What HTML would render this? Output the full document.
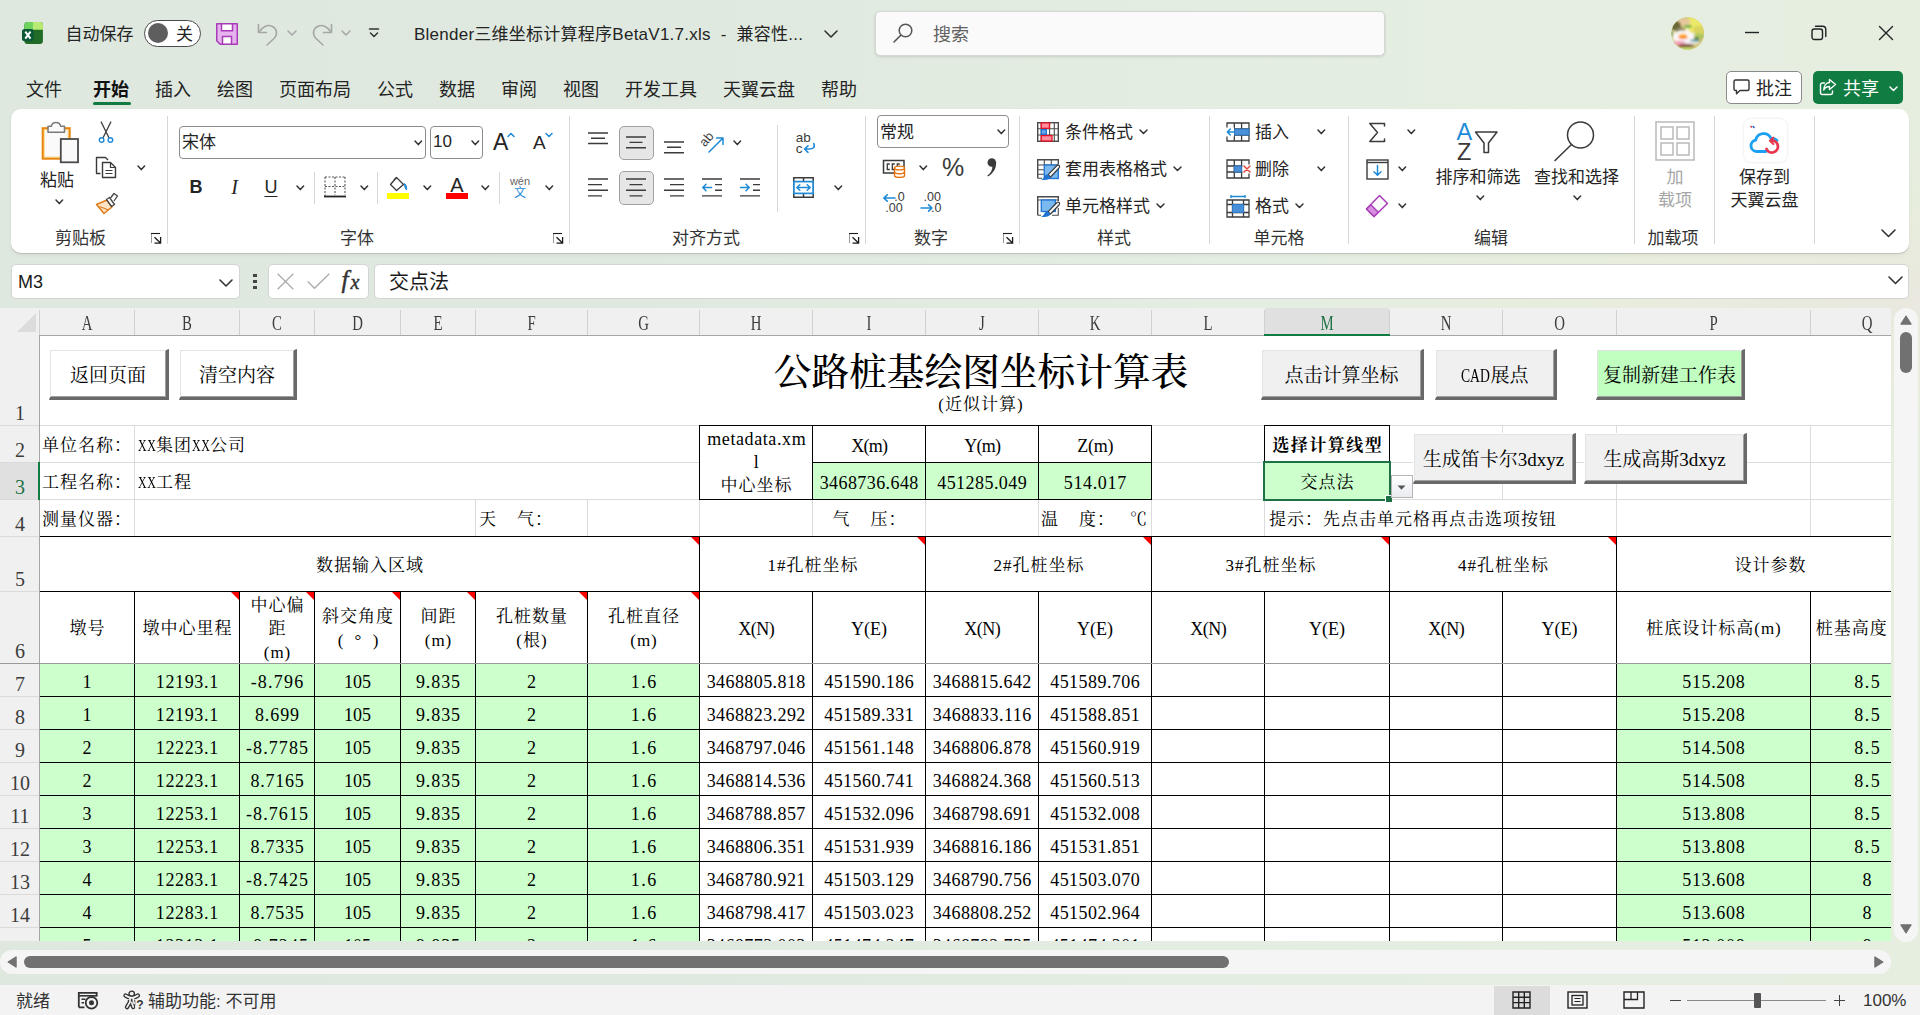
<!DOCTYPE html>
<html lang="zh-CN"><head><meta charset="utf-8"><title>Excel</title>
<style>
*{box-sizing:border-box;margin:0;padding:0}
html,body{width:1920px;height:1015px;overflow:hidden}
body{position:relative;background:radial-gradient(ellipse 620px 150px at 1920px 300px,#eae8df 0,rgba(232,237,220,.85) 55%,rgba(230,238,222,0) 100%),linear-gradient(90deg,#dee8df 0,#e0e9df 35%,#e3ede1 62%,#e5eee1 85%,#e6eee0 100%);font-family:"Liberation Sans","Noto Sans CJK SC",sans-serif;color:#242424}
.abs{position:absolute}
.t{position:absolute;white-space:nowrap}
svg{position:absolute;overflow:visible}

.ui{position:absolute;white-space:nowrap;color:#242424}
.u17{font-size:17px;line-height:24px}
.u18{font-size:18px;line-height:24px}
.sep{position:absolute;width:1px;background:#d6d6d6}
.box{position:absolute;background:#fff;border:1px solid #8c8c8c;border-radius:4px}
.selbtn{position:absolute;background:#e6e6e6;border:1px solid #a0a0a0;border-radius:5px}

#sheet{position:absolute;left:0;top:0;width:1891px;height:941px;overflow:hidden}
#sheet .bg{position:absolute;left:0;top:308px;width:1891px;height:633px;background:#fff}
#sheet .hb{position:absolute;background:#f0f0f0}
.ln{position:absolute;background:#000}
.gl{position:absolute;background:#dcdcdc}
.fill{position:absolute;background:#ccffcc}
.c{position:absolute;display:flex;align-items:center;justify-content:center;white-space:nowrap;
 font-family:"Liberation Serif","Noto Serif CJK SC",serif;font-size:17px;line-height:20px;color:#000;text-align:center;padding-top:3px;letter-spacing:1px;padding-left:1px}
.c.l{justify-content:flex-start;text-align:left;padding-left:0}
.c.r{justify-content:flex-end;text-align:right}
.n{font-size:18px;letter-spacing:.45px;padding-left:.45px}
.ch{position:absolute;top:310px;height:26px;font:20px/26px "Liberation Serif",serif;color:#3c3c3c;text-align:center;transform:scaleX(.74)}
.rh{position:absolute;left:0;width:40px;font:20px/20px "Liberation Serif",serif;color:#3c3c3c;text-align:center}
.tri{position:absolute;width:0;height:0;border-top:8px solid #ff0000;border-left:8px solid transparent}
.btn{position:absolute;background:#f0f0f0;border-style:solid;border-width:1px 3px 3px 1px;border-color:#fff #696969 #696969 #fff;
 box-shadow:inset 1px 1px 0 #e3e3e3, inset -1px -1px 0 #a0a0a0;display:flex;align-items:center;justify-content:center;
 font-family:"Liberation Serif","Noto Serif CJK SC",serif;font-size:19px;color:#000;white-space:nowrap}
</style></head>
<body>
<svg style="left:22px;top:22px" width="21" height="22" viewBox="0 0 21 22" ><rect x="2.4" y="0" width="18.5" height="22" rx="3" fill="#206b26"/><path d="M2.4 3A3 3 0 0 1 5.400 0H11V7.500H2.400Z" fill="#6fd35f"/><path d="M11 0H17.900A3 3 0 0 1 20.900 3V7.800H11Z" fill="#b9ea74"/><rect x="0" y="7" width="11.700" height="12.200" rx="2.600" fill="#0b5a35"/><path d="M3.300 9.700L8.500 16.600M8.500 9.700L3.300 16.600" stroke="#fff" stroke-width="2"/></svg>
<div class="ui" style="top:22.700000000000003px;font-size:17px;line-height:24px;left:65.5px">自动保存</div>
<div class="abs" style="left:144px;top:19.5px;width:57px;height:27px;border:1px solid #4a4a4a;border-radius:14px;background:#fff"></div>
<div class="abs" style="left:148px;top:23px;width:20px;height:20px;border-radius:50%;background:#5e5e5e"></div>
<div class="ui" style="top:22.700000000000003px;font-size:17px;line-height:24px;left:176px">关</div>
<svg style="left:216px;top:23px" width="22" height="22" viewBox="0 0 22 22" ><path d="M0.75 0.75H21.25V21.25H4.2L0.75 17.8Z" fill="#e6b3ee" stroke="#a83bb8" stroke-width="1.5" stroke-linejoin="round"/><rect x="5.5" y="0.75" width="11" height="7" fill="#fff" stroke="#a83bb8" stroke-width="1.5"/><rect x="6.5" y="13.5" width="9" height="7.7" fill="#fff" stroke="#a83bb8" stroke-width="1.5"/></svg>
<svg style="left:256px;top:22px" width="24" height="24" viewBox="0 0 24 24" ><path d="M2.5 2.5V10.5H10.5" fill="none" stroke="#a6a6a6" stroke-width="1.6" stroke-linecap="round" stroke-linejoin="round"/><path d="M3 10.2C6 5 11.5 2.3 16 4.2C21 6.3 21.8 12 18.5 16L11 23" fill="none" stroke="#a6a6a6" stroke-width="1.6" stroke-linecap="round"/></svg>
<svg style="left:287.0px;top:30.0px" width="10" height="6" viewBox="0 0 10 6" ><path d="M1 1L5.0 5L9 1" fill="none" stroke="#a6a6a6" stroke-width="1.5" stroke-linecap="round" stroke-linejoin="round"/></svg>
<svg style="left:310px;top:22px" width="24" height="24" viewBox="0 0 24 24" ><path d="M21.5 2.5V10.5H13.5" fill="none" stroke="#a6a6a6" stroke-width="1.6" stroke-linecap="round" stroke-linejoin="round"/><path d="M21 10.2C18 5 12.5 2.3 8 4.2C3 6.3 2.2 12 5.5 16L13 23" fill="none" stroke="#a6a6a6" stroke-width="1.6" stroke-linecap="round"/></svg>
<svg style="left:341.0px;top:30.0px" width="10" height="6" viewBox="0 0 10 6" ><path d="M1 1L5.0 5L9 1" fill="none" stroke="#a6a6a6" stroke-width="1.5" stroke-linecap="round" stroke-linejoin="round"/></svg>
<svg style="left:368px;top:27px" width="12" height="12" viewBox="0 0 12 12" ><path d="M1.5 2H10.5" stroke="#333" stroke-width="1.5" stroke-linecap="round"/><path d="M2.5 6L6 9.5L9.5 6" fill="none" stroke="#333" stroke-width="1.5" stroke-linecap="round" stroke-linejoin="round"/></svg>
<div class="ui" style="top:22.700000000000003px;font-size:17px;line-height:24px;left:414px;letter-spacing:.25px">Blender三维坐标计算程序BetaV1.7.xls&nbsp;&nbsp;-&nbsp;&nbsp;兼容性...</div>
<svg style="left:824.0px;top:30.0px" width="14" height="8" viewBox="0 0 14 8" ><path d="M1 1L7.0 7L13 1" fill="none" stroke="#333" stroke-width="1.6" stroke-linecap="round" stroke-linejoin="round"/></svg>
<div class="abs" style="left:875px;top:11px;width:510px;height:45px;background:#fafafa;border:1px solid #d4d7d3;border-radius:5px;box-shadow:0 1px 3px rgba(0,0,0,.12)"></div>
<svg style="left:892px;top:22px" width="22" height="22" viewBox="0 0 22 22" ><circle cx="13.5" cy="8.5" r="6.3" fill="none" stroke="#555" stroke-width="1.5"/><path d="M9 13L2 20" stroke="#555" stroke-width="1.6" stroke-linecap="round"/></svg>
<div class="ui" style="top:22.700000000000003px;font-size:18px;line-height:24px;left:933px;color:#616161">搜索</div>
<svg style="left:1671px;top:17px" width="33" height="33" viewBox="0 0 33 33" ><defs><clipPath id="avc"><circle cx="16.700" cy="16.500" r="16.300"/></clipPath><filter id="avb" x="-20%" y="-20%" width="140%" height="140%"><feGaussianBlur stdDeviation="1.100"/></filter></defs><g clip-path="url(#avc)"><rect width="34" height="34" fill="#cfc672"/><g filter="url(#avb)"><ellipse cx="24" cy="8" rx="11" ry="9" fill="#ece868"/><ellipse cx="28" cy="14" rx="6" ry="5" fill="#d9d35e"/><ellipse cx="12.500" cy="5" rx="7" ry="4" fill="#e6c89c"/><ellipse cx="5" cy="9" rx="5" ry="5" fill="#6a6838"/><ellipse cx="9.500" cy="13" rx="4.500" ry="2.500" fill="#8d8762"/><ellipse cx="17" cy="9.500" rx="4" ry="1.400" fill="#6fae4a"/><ellipse cx="27.500" cy="19" rx="6" ry="2.600" fill="#a8c860"/><ellipse cx="12.500" cy="20.500" rx="11" ry="7" fill="#faf3f4"/><path d="M2 13L6.500 18L10 13L13 18L16 10.500L19.500 17L24 16L20 25L5 25Z" fill="#fbf6f7"/><ellipse cx="12" cy="20" rx="4.600" ry="2.100" fill="#ff8a1c"/><ellipse cx="12" cy="17.700" rx="3.500" ry="1" fill="#ffc23a"/><ellipse cx="12" cy="23.700" rx="2.800" ry="1.600" fill="#eef3f8"/><ellipse cx="8.500" cy="26" rx="6" ry="2.300" fill="#f2a3ba"/><ellipse cx="25.500" cy="21.300" rx="2.800" ry="1.200" fill="#6b7a30"/><ellipse cx="24" cy="23.600" rx="5" ry="1.100" fill="#2f9ab0"/><ellipse cx="21" cy="26" rx="8" ry="1.500" fill="#e9e4ea"/><ellipse cx="15" cy="28.600" rx="8" ry="1.700" fill="#7a4030"/><ellipse cx="16" cy="31.800" rx="6" ry="1.600" fill="#b9dc6a"/><ellipse cx="0.800" cy="17" rx="1.100" ry="3.200" fill="#5a9a3a"/></g></g></svg>
<svg style="left:1744px;top:25px" width="16" height="16" viewBox="0 0 16 16" ><path d="M1 7.5H15" stroke="#222" stroke-width="1.4"/></svg>
<svg style="left:1811px;top:25px" width="16" height="16" viewBox="0 0 16 16" ><rect x="1" y="4" width="10.5" height="10.5" rx="2.2" fill="none" stroke="#222" stroke-width="1.4"/><path d="M4.5 1.2H11.5A3.3 3.3 0 0 1 14.8 4.5V11.5" fill="none" stroke="#222" stroke-width="1.4" stroke-linecap="round"/></svg>
<svg style="left:1878px;top:25px" width="16" height="16" viewBox="0 0 16 16" ><path d="M1.5 1.5L14.5 14.5M14.5 1.5L1.5 14.5" stroke="#222" stroke-width="1.4" stroke-linecap="round"/></svg>
<div class="ui" style="top:77.7px;font-size:18px;line-height:24px;left:26px">文件</div>
<div class="ui" style="top:77.7px;font-size:18px;line-height:24px;left:93px;color:#111;font-weight:700">开始</div>
<div class="ui" style="top:77.7px;font-size:18px;line-height:24px;left:155px">插入</div>
<div class="ui" style="top:77.7px;font-size:18px;line-height:24px;left:217px">绘图</div>
<div class="ui" style="top:77.7px;font-size:18px;line-height:24px;left:279px">页面布局</div>
<div class="ui" style="top:77.7px;font-size:18px;line-height:24px;left:377px">公式</div>
<div class="ui" style="top:77.7px;font-size:18px;line-height:24px;left:439px">数据</div>
<div class="ui" style="top:77.7px;font-size:18px;line-height:24px;left:501px">审阅</div>
<div class="ui" style="top:77.7px;font-size:18px;line-height:24px;left:563px">视图</div>
<div class="ui" style="top:77.7px;font-size:18px;line-height:24px;left:625px">开发工具</div>
<div class="ui" style="top:77.7px;font-size:18px;line-height:24px;left:723px">天翼云盘</div>
<div class="ui" style="top:77.7px;font-size:18px;line-height:24px;left:821px">帮助</div>
<div class="abs" style="left:93px;top:102px;width:38px;height:3px;border-radius:2px;background:#107c41"></div>
<div class="abs" style="left:1726px;top:71px;width:76px;height:33px;background:#fff;border:1px solid #8a8a8a;border-radius:5px"></div>
<svg style="left:1733px;top:79px" width="18" height="16" viewBox="0 0 18 16" ><path d="M2.5 1H14.5A1.5 1.5 0 0 1 16 2.5V10A1.5 1.5 0 0 1 14.5 11.5H7L3.5 14.8V11.5H2.5A1.5 1.5 0 0 1 1 10V2.5A1.5 1.5 0 0 1 2.5 1Z" fill="none" stroke="#333" stroke-width="1.4" stroke-linejoin="round"/></svg>
<div class="ui" style="top:77.2px;font-size:18px;line-height:24px;left:1756px">批注</div>
<div class="abs" style="left:1813px;top:71px;width:90px;height:33px;background:#107c41;border-radius:5px"></div>
<svg style="left:1819px;top:78px" width="18" height="18" viewBox="0 0 18 18" ><path d="M5.5 5H3.5A2 2 0 0 0 1.5 7V14.5A2 2 0 0 0 3.5 16.5H11.5A2 2 0 0 0 13.500 14.5V13" fill="none" stroke="#fff" stroke-width="1.4" stroke-linecap="round"/><path d="M10.5 1.5L16.5 6.5L10.5 11.5V8.5C7.5 8.5 5.8 9.8 4.8 12C4.8 8 7 4.8 10.5 4.5Z" fill="none" stroke="#fff" stroke-width="1.4" stroke-linejoin="round"/></svg>
<div class="ui" style="top:77.2px;font-size:18px;line-height:24px;left:1843px;color:#fff">共享</div>
<svg style="left:1888.5px;top:85.75px" width="9" height="5.5" viewBox="0 0 9 5.5" ><path d="M1 1L4.5 4.5L8 1" fill="none" stroke="#fff" stroke-width="1.5" stroke-linecap="round" stroke-linejoin="round"/></svg>
<div class="abs" style="left:11px;top:109px;width:1898px;height:144px;background:#fff;border-radius:10px;box-shadow:0 1px 0 rgba(0,0,0,.13),0 2px 4px rgba(0,0,0,.06)"></div>
<svg style="left:40px;top:120px" width="41" height="45" viewBox="0 0 41 45" ><rect x="2.700" y="8.200" width="27" height="30.500" fill="#fbe2a4" stroke="#e8850c" stroke-width="2"/><rect x="5" y="10.500" width="22.400" height="25.900" fill="#fafafa"/><path d="M8 12.300V6.300H11.300A4.800 4.800 0 0 1 20.700 6.300H24.500V12.300Z" fill="#fafafa" stroke="#7a7a7a" stroke-width="1.500" stroke-linejoin="round"/><rect x="20.800" y="19" width="17.200" height="23.300" fill="#fafafa" stroke="#4a4a4a" stroke-width="1.800"/></svg>
<div class="ui" style="top:169.0px;font-size:17px;line-height:24px;left:-143.0px;width:400px;text-align:center">粘贴</div>
<svg style="left:54.7px;top:198.7px" width="8.6" height="5.6" viewBox="0 0 8.6 5.6" ><path d="M1 1L4.3 4.6L7.6 1" fill="none" stroke="#333" stroke-width="1.5" stroke-linecap="round" stroke-linejoin="round"/></svg>
<svg style="left:98px;top:121px" width="16" height="23" viewBox="0 0 16 23" ><path d="M3.2 1L10.8 16.5M12.8 1L5.2 16.5" stroke="#3b3b3b" stroke-width="1.3" fill="none" stroke-linecap="round"/><circle cx="3.6" cy="19" r="2.3" fill="#fff" stroke="#1e8ad6" stroke-width="1.4"/><circle cx="12.4" cy="19" r="2.3" fill="#fff" stroke="#1e8ad6" stroke-width="1.4"/></svg>
<svg style="left:95px;top:156px" width="23" height="23" viewBox="0 0 23 23" ><path d="M5.5 17.500H1.5V1.500H10.5L13 4" fill="none" stroke="#3b3b3b" stroke-width="1.4" stroke-linejoin="round"/><path d="M7.500 6.5H15.5L20.5 11.500V21.500H7.500Z" fill="#fff" stroke="#3b3b3b" stroke-width="1.4" stroke-linejoin="round"/><path d="M15.5 6.500V11.5H20.500" fill="none" stroke="#3b3b3b" stroke-width="1.2"/><path d="M10.500 14.5H17.5M10.500 17.5H17.500" stroke="#3b3b3b" stroke-width="1.2"/></svg>
<svg style="left:136.7px;top:164.7px" width="8.6" height="5.6" viewBox="0 0 8.6 5.6" ><path d="M1 1L4.3 4.6L7.6 1" fill="none" stroke="#333" stroke-width="1.5" stroke-linecap="round" stroke-linejoin="round"/></svg>
<svg style="left:95px;top:192px" width="24" height="23" viewBox="0 0 24 23" ><path d="M1.500 12.5L12 8L17 15L9 21.500Z" fill="#fbe3c4" stroke="#e07b1a" stroke-width="1.5" stroke-linejoin="round"/><path d="M4.5 14.500L13.5 18" stroke="#e07b1a" stroke-width="1.2"/><path d="M11.500 7.500L14.500 5.500L19.500 12.500L16.5 14.500Z" fill="#fff" stroke="#444" stroke-width="1.3" stroke-linejoin="round"/><path d="M15.500 6L19 1.500L22.500 4L19 9" fill="#fff" stroke="#444" stroke-width="1.3" stroke-linejoin="round"/></svg>
<div class="ui" style="top:226.5px;font-size:17px;line-height:24px;left:-119.5px;width:400px;text-align:center;color:#333">剪贴板</div>
<svg style="left:151px;top:233px" width="11" height="11" viewBox="0 0 11 11" ><path d="M0.500 0V10" stroke="#9a9a9a" stroke-width="1"/><path d="M0 0.500H9" stroke="#1a1a1a" stroke-width="1.100"/><path d="M3.500 4.300L9.300 9.800M9.600 4V10.200H3.500" fill="none" stroke="#1a1a1a" stroke-width="1.300" stroke-linejoin="miter"/></svg>
<div class="sep" style="left:167px;top:116px;height:128px"></div>
<div class="box" style="left:179px;top:126px;width:247px;height:33px"></div>
<div class="ui" style="top:131.0px;font-size:17px;line-height:24px;left:182px">宋体</div>
<svg style="left:413.7px;top:140.2px" width="8.6" height="5.6" viewBox="0 0 8.6 5.6" ><path d="M1 1L4.3 4.6L7.6 1" fill="none" stroke="#333" stroke-width="1.5" stroke-linecap="round" stroke-linejoin="round"/></svg>
<div class="box" style="left:429.500px;top:126px;width:53.500px;height:33px"></div>
<div class="ui" style="top:130.0px;font-size:17px;line-height:24px;left:433px">10</div>
<svg style="left:470.7px;top:140.2px" width="8.6" height="5.6" viewBox="0 0 8.6 5.6" ><path d="M1 1L4.3 4.6L7.6 1" fill="none" stroke="#333" stroke-width="1.5" stroke-linecap="round" stroke-linejoin="round"/></svg>
<div class="ui" style="top:129.5px;font-size:23px;line-height:24px;left:493px">A</div>
<svg style="left:507px;top:132px" width="8" height="6" viewBox="0 0 8 6" ><path d="M1 4.500L4 1.500L7 4.500" fill="none" stroke="#1e8ad6" stroke-width="1.500" stroke-linecap="round" stroke-linejoin="round"/></svg>
<div class="ui" style="top:131.0px;font-size:19px;line-height:24px;left:533px">A</div>
<svg style="left:545px;top:132px" width="8" height="6" viewBox="0 0 8 6" ><path d="M1 1.500L4 4.500L7 1.500" fill="none" stroke="#1e8ad6" stroke-width="1.500" stroke-linecap="round" stroke-linejoin="round"/></svg>
<div class="ui" style="top:175.0px;font-size:18px;line-height:24px;left:176.0px;width:40px;text-align:center;font-weight:700">B</div>
<div class="ui" style="top:175.0px;font-size:20px;line-height:24px;left:214.5px;width:40px;text-align:center;font-family:'Liberation Serif',serif;font-style:italic">I</div>
<div class="ui" style="top:174.5px;font-size:18px;line-height:24px;left:251.0px;width:40px;text-align:center;text-decoration:underline;text-underline-offset:2.5px;text-decoration-thickness:1.3px">U</div>
<svg style="left:296.2px;top:184.7px" width="8.6" height="5.6" viewBox="0 0 8.6 5.6" ><path d="M1 1L4.3 4.6L7.6 1" fill="none" stroke="#333" stroke-width="1.5" stroke-linecap="round" stroke-linejoin="round"/></svg>
<div class="sep" style="left:314px;top:172px;height:32px"></div>
<svg style="left:324px;top:176px" width="22" height="22" viewBox="0 0 22 22" ><path d="M1 1H21M1 1V21M21 1V19M11 1V19M1 10.5H21" fill="none" stroke="#555" stroke-width="1.1" stroke-dasharray="2 1.5"/><path d="M0 20.500H22" stroke="#222" stroke-width="1.8"/></svg>
<svg style="left:359.7px;top:184.7px" width="8.6" height="5.6" viewBox="0 0 8.6 5.6" ><path d="M1 1L4.3 4.6L7.6 1" fill="none" stroke="#333" stroke-width="1.5" stroke-linecap="round" stroke-linejoin="round"/></svg>
<div class="sep" style="left:377px;top:172px;height:32px"></div>
<svg style="left:387px;top:176px" width="23" height="17" viewBox="0 0 23 17" ><path d="M9.500 1.500L16.500 8.500L9.500 14.500L3.500 8.500Z" fill="#fff" stroke="#3b3b3b" stroke-width="1.3" stroke-linejoin="round"/><path d="M7 4L9.500 1.5" stroke="#3b3b3b" stroke-width="1.3"/><path d="M17.500 7.500C19.5 9.500 20 11.500 19.500 14C18 12 17.500 10.500 17.500 7.500Z" fill="#1e8ad6" stroke="#1e8ad6" stroke-width="1"/></svg>
<div class="abs" style="left:387px;top:193px;width:22px;height:6px;background:#ffff00"></div>
<svg style="left:422.7px;top:184.7px" width="8.6" height="5.6" viewBox="0 0 8.6 5.6" ><path d="M1 1L4.3 4.6L7.6 1" fill="none" stroke="#333" stroke-width="1.5" stroke-linecap="round" stroke-linejoin="round"/></svg>
<div class="ui" style="top:172.5px;font-size:20px;line-height:24px;left:437.0px;width:40px;text-align:center">A</div>
<div class="abs" style="left:446px;top:193px;width:22px;height:6px;background:#ff0000"></div>
<svg style="left:481.2px;top:184.7px" width="8.6" height="5.6" viewBox="0 0 8.6 5.6" ><path d="M1 1L4.3 4.6L7.6 1" fill="none" stroke="#333" stroke-width="1.5" stroke-linecap="round" stroke-linejoin="round"/></svg>
<div class="sep" style="left:499px;top:172px;height:32px"></div>
<div class="ui" style="top:175.0px;font-size:11px;line-height:12px;left:500.0px;width:40px;text-align:center;color:#666">wén</div>
<div class="ui" style="top:186.5px;font-size:12px;line-height:13px;left:500.0px;width:40px;text-align:center;color:#1e8ad6">文</div>
<svg style="left:544.7px;top:184.7px" width="8.6" height="5.6" viewBox="0 0 8.6 5.6" ><path d="M1 1L4.3 4.6L7.6 1" fill="none" stroke="#333" stroke-width="1.5" stroke-linecap="round" stroke-linejoin="round"/></svg>
<div class="ui" style="top:226.5px;font-size:17px;line-height:24px;left:157.0px;width:400px;text-align:center;color:#333">字体</div>
<svg style="left:553px;top:233px" width="11" height="11" viewBox="0 0 11 11" ><path d="M0.500 0V10" stroke="#9a9a9a" stroke-width="1"/><path d="M0 0.500H9" stroke="#1a1a1a" stroke-width="1.100"/><path d="M3.500 4.300L9.300 9.800M9.600 4V10.200H3.500" fill="none" stroke="#1a1a1a" stroke-width="1.300" stroke-linejoin="miter"/></svg>
<div class="sep" style="left:569px;top:116px;height:128px"></div>
<svg style="left:588px;top:131.9px" width="20" height="12.5" viewBox="0 131.9 20 12.5" ><path d="M0.0 132.9H20.0M3.0 138.2H17.0M0.0 143.4H20.0" stroke="#3b3b3b" stroke-width="1.4" fill="none"/></svg>
<div class="selbtn" style="left:619px;top:126px;width:35px;height:34px"></div>
<svg style="left:625.5px;top:135.6px" width="20" height="12.700000000000017" viewBox="0 135.6 20 12.700000000000017" ><path d="M0.0 136.6H20.0M3.5 142H16.5M0.0 147.3H20.0" stroke="#3b3b3b" stroke-width="1.4" fill="none"/></svg>
<svg style="left:664px;top:141.2px" width="20" height="12.700000000000017" viewBox="0 141.2 20 12.700000000000017" ><path d="M0.0 142.2H20.0M3.0 147.5H17.0M0.0 152.9H20.0" stroke="#3b3b3b" stroke-width="1.4" fill="none"/></svg>
<svg style="left:699px;top:130px" width="26" height="25" viewBox="0 0 26 25" ><text x="0" y="0" transform="translate(6 17.500) rotate(-50)" font-family="Liberation Sans,sans-serif" font-size="13" fill="#3b3b3b">ab</text><path d="M10 22L23.500 8.500M17.500 8H24V14.500" fill="none" stroke="#1e8ad6" stroke-width="1.500" stroke-linecap="round" stroke-linejoin="round"/></svg>
<svg style="left:732.7px;top:140.2px" width="8.6" height="5.6" viewBox="0 0 8.6 5.6" ><path d="M1 1L4.3 4.6L7.6 1" fill="none" stroke="#333" stroke-width="1.5" stroke-linecap="round" stroke-linejoin="round"/></svg>
<div class="sep" style="left:777px;top:125px;height:87px"></div>
<svg style="left:795px;top:131px" width="22" height="24" viewBox="0 0 22 24" ><text x="0.800" y="11" font-family="Liberation Sans,sans-serif" font-size="13.500" fill="#3b3b3b">ab</text><text x="0.800" y="21.500" font-family="Liberation Sans,sans-serif" font-size="13.500" fill="#3b3b3b">c</text><path d="M18.800 12.500C20.500 16.500 17.500 18 14.500 18H9.800M13 14.800L9.500 18L13 21.300" fill="none" stroke="#1e8ad6" stroke-width="1.600" stroke-linecap="round" stroke-linejoin="round"/></svg>
<svg style="left:588px;top:177.7px" width="20" height="18.900000000000006" viewBox="0 177.7 20 18.900000000000006" ><path d="M0 178.7H20M0 184.3H14M0 190H20M0 195.6H14" stroke="#3b3b3b" stroke-width="1.4" fill="none"/></svg>
<div class="selbtn" style="left:619px;top:171px;width:35px;height:34px"></div>
<svg style="left:625.5px;top:177.7px" width="20" height="18.900000000000006" viewBox="0 177.7 20 18.900000000000006" ><path d="M0.0 178.7H20.0M3.5 184.3H16.5M0.0 190H20.0M3.5 195.6H16.5" stroke="#3b3b3b" stroke-width="1.4" fill="none"/></svg>
<svg style="left:664px;top:177.7px" width="20" height="18.900000000000006" viewBox="0 177.7 20 18.900000000000006" ><path d="M0 178.7H20M6 184.3H20M0 190H20M6 195.6H20" stroke="#3b3b3b" stroke-width="1.4" fill="none"/></svg>
<svg style="left:701px;top:178px" width="22" height="20" viewBox="0 0 22 20" ><path d="M1 1H21M14 6.600H21M14 12.300H21M1 17.900H21" stroke="#3b3b3b" stroke-width="1.400" fill="none"/><path d="M10.500 9.500H2M5 6.300L1.800 9.500L5 12.700" fill="none" stroke="#1e8ad6" stroke-width="1.500" stroke-linecap="round" stroke-linejoin="round"/></svg>
<svg style="left:739px;top:178px" width="22" height="20" viewBox="0 0 22 20" ><path d="M1 1H21M14 6.600H21M14 12.300H21M1 17.900H21" stroke="#3b3b3b" stroke-width="1.400" fill="none"/><path d="M1.500 9.500H10M7 6.300L10.200 9.500L7 12.700" fill="none" stroke="#1e8ad6" stroke-width="1.500" stroke-linecap="round" stroke-linejoin="round"/></svg>
<svg style="left:793px;top:177px" width="21" height="21" viewBox="0 0 21 21" ><path d="M0.800 0.800H20.200V20.200H0.800ZM10.500 0.800V4.500M10.500 16.500V20.200" fill="none" stroke="#3b3b3b" stroke-width="1.500"/><rect x="0.900" y="4.600" width="19.200" height="11.800" fill="#fff" stroke="#1e8ad6" stroke-width="1.700"/><path d="M4 10.500H17M6.800 7.700L3.800 10.500L6.800 13.300M14.200 7.700L17.200 10.500L14.200 13.300" fill="none" stroke="#1e8ad6" stroke-width="1.500" stroke-linecap="round" stroke-linejoin="round"/></svg>
<svg style="left:833.7px;top:184.7px" width="8.6" height="5.6" viewBox="0 0 8.6 5.6" ><path d="M1 1L4.3 4.6L7.6 1" fill="none" stroke="#333" stroke-width="1.5" stroke-linecap="round" stroke-linejoin="round"/></svg>
<div class="ui" style="top:226.5px;font-size:17px;line-height:24px;left:506.0px;width:400px;text-align:center;color:#333">对齐方式</div>
<svg style="left:849px;top:233px" width="11" height="11" viewBox="0 0 11 11" ><path d="M0.500 0V10" stroke="#9a9a9a" stroke-width="1"/><path d="M0 0.500H9" stroke="#1a1a1a" stroke-width="1.100"/><path d="M3.500 4.300L9.300 9.800M9.600 4V10.200H3.500" fill="none" stroke="#1a1a1a" stroke-width="1.300" stroke-linejoin="miter"/></svg>
<div class="sep" style="left:865px;top:116px;height:128px"></div>
<div class="box" style="left:877px;top:115px;width:132px;height:33px"></div>
<div class="ui" style="top:120.5px;font-size:17px;line-height:24px;left:880px">常规</div>
<svg style="left:996.7px;top:129.2px" width="8.6" height="5.6" viewBox="0 0 8.6 5.6" ><path d="M1 1L4.3 4.6L7.6 1" fill="none" stroke="#333" stroke-width="1.5" stroke-linecap="round" stroke-linejoin="round"/></svg>
<svg style="left:882px;top:159px" width="26" height="21" viewBox="0 0 26 21" ><rect x="1.500" y="1.500" width="20.500" height="12.500" fill="#fff" stroke="#3b3b3b" stroke-width="1.500"/><path d="M7.800 5H5.300V10.500H7.800M12.800 5H10.300V10.500H12.800M17.800 5H15.300V8" fill="none" stroke="#3b3b3b" stroke-width="1.300"/><path d="M12.500 9V16.500A5 1.900 0 0 0 22.500 16.500V9" fill="#fff" stroke="#e8700a" stroke-width="1.400"/><ellipse cx="17.500" cy="9" rx="5" ry="1.900" fill="#fff" stroke="#e8700a" stroke-width="1.400"/><path d="M12.500 12.800A5 1.900 0 0 0 22.500 12.800" fill="none" stroke="#e8700a" stroke-width="1.400"/></svg>
<svg style="left:918.7px;top:165.2px" width="8.6" height="5.6" viewBox="0 0 8.6 5.6" ><path d="M1 1L4.3 4.6L7.6 1" fill="none" stroke="#333" stroke-width="1.5" stroke-linecap="round" stroke-linejoin="round"/></svg>
<div class="ui" style="top:153.0px;font-size:25px;line-height:28px;left:933.0px;width:40px;text-align:center;color:#3b3b3b">%</div>
<svg style="left:985px;top:157px" width="13" height="21" viewBox="0 0 13 21" ><circle cx="6.800" cy="5.500" r="4.300" fill="#3b3b3b"/><path d="M11.100 5.500C11.300 11.500 8.500 16 3 19.500L2.300 18.600C6 15.800 7.800 12.500 7.300 8.500Z" fill="#3b3b3b"/></svg>
<svg style="left:882px;top:191px" width="24" height="23" viewBox="0 0 24 23" ><text x="12.300" y="10" font-family="Liberation Sans,sans-serif" font-size="12.500" fill="#3b3b3b">.0</text><text x="3.300" y="21.400" font-family="Liberation Sans,sans-serif" font-size="12.500" fill="#3b3b3b">.00</text><path d="M13 7H2M5.200 3.800L1.800 7L5.200 10.200" fill="none" stroke="#1e8ad6" stroke-width="1.600" stroke-linecap="round" stroke-linejoin="round"/></svg>
<svg style="left:919px;top:191px" width="24" height="23" viewBox="0 0 24 23" ><text x="4.500" y="10" font-family="Liberation Sans,sans-serif" font-size="12.500" fill="#3b3b3b">.00</text><text x="12" y="21.400" font-family="Liberation Sans,sans-serif" font-size="12.500" fill="#3b3b3b">.0</text><path d="M2 17H12.800M9.600 13.800L13 17L9.600 20.200" fill="none" stroke="#1e8ad6" stroke-width="1.600" stroke-linecap="round" stroke-linejoin="round"/></svg>
<div class="ui" style="top:226.5px;font-size:17px;line-height:24px;left:731.0px;width:400px;text-align:center;color:#333">数字</div>
<svg style="left:1003px;top:233px" width="11" height="11" viewBox="0 0 11 11" ><path d="M0.500 0V10" stroke="#9a9a9a" stroke-width="1"/><path d="M0 0.500H9" stroke="#1a1a1a" stroke-width="1.100"/><path d="M3.500 4.300L9.300 9.800M9.600 4V10.200H3.500" fill="none" stroke="#1a1a1a" stroke-width="1.300" stroke-linejoin="miter"/></svg>
<div class="sep" style="left:1019px;top:116px;height:128px"></div>
<svg style="left:1037px;top:122px" width="22" height="20" viewBox="0 0 22 20" ><rect x="0.700" y="0.700" width="20.600" height="18.600" fill="#fff" stroke="#4a4a4a" stroke-width="1.400"/><path d="M0.700 6.700H21.300M0.700 13H21.300M4.200 0.700V19.300M12.600 0.700V19.300M17.300 0.700V19.300" stroke="#4a4a4a" stroke-width="1.100"/><rect x="4.300" y="0.900" width="8.200" height="5.400" fill="#ff8fa0" stroke="#e81123" stroke-width="1.300"/><rect x="4.300" y="7.600" width="5" height="4.700" fill="#6aa9ea" stroke="#1e73d2" stroke-width="1.300"/><rect x="4.300" y="13.600" width="10.700" height="5.400" fill="#ff8fa0" stroke="#e81123" stroke-width="1.300"/></svg>
<div class="ui" style="top:121.0px;font-size:17px;line-height:24px;left:1065px">条件格式</div>
<svg style="left:1138.5px;top:129.25px" width="9" height="5.5" viewBox="0 0 9 5.5" ><path d="M1 1L4.5 4.5L8 1" fill="none" stroke="#333" stroke-width="1.5" stroke-linecap="round" stroke-linejoin="round"/></svg>
<svg style="left:1037px;top:159px" width="24" height="23" viewBox="0 0 24 23" ><path d="M0.700 19.300V0.700H21.300V5" fill="none" stroke="#4a4a4a" stroke-width="1.400"/><path d="M0.700 6H21.300M0.700 10.700H7.300M0.700 15.300H7.300M7.300 0.700V6M14.300 0.700V6M0.700 19.300H5" stroke="#4a4a4a" stroke-width="1.100" fill="none"/><rect x="7.300" y="6" width="14" height="13.500" fill="#7ab8f0" stroke="#1e73d2" stroke-width="1.300"/><path d="M21.800 6.300C22.800 7 22.800 8 22 9L13.500 18L11 15.800L19.500 7C20.300 6.200 21 5.800 21.800 6.300Z" fill="#fff" stroke="#3b3b3b" stroke-width="1.200" stroke-linejoin="round"/><path d="M11 15.800L13.500 18C12.800 20.500 9 21.500 4 20.800C6.500 19.800 7 18.500 7.500 17.300C8.300 15.600 9.800 15.200 11 15.800Z" fill="#1e73d2"/></svg>
<div class="ui" style="top:158.0px;font-size:17px;line-height:24px;left:1065px">套用表格格式</div>
<svg style="left:1172.5px;top:166.25px" width="9" height="5.5" viewBox="0 0 9 5.5" ><path d="M1 1L4.5 4.5L8 1" fill="none" stroke="#333" stroke-width="1.5" stroke-linecap="round" stroke-linejoin="round"/></svg>
<svg style="left:1037px;top:196px" width="24" height="23" viewBox="0 0 24 23" ><path d="M0.700 19.300V0.700H21.300V5" fill="none" stroke="#4a4a4a" stroke-width="1.400"/><path d="M0.700 4H21.300M0.700 19.300H4M21.300 12V19.300H15" stroke="#4a4a4a" stroke-width="1.100" fill="none"/><rect x="4.300" y="4" width="14" height="11.500" fill="#7ab8f0" stroke="#1e73d2" stroke-width="1.300"/><path d="M21.800 6.300C22.800 7 22.800 8 22 9L13.500 18L11 15.800L19.500 7C20.300 6.200 21 5.800 21.800 6.300Z" fill="#fff" stroke="#3b3b3b" stroke-width="1.200" stroke-linejoin="round"/><path d="M11 15.800L13.500 18C12.800 20.500 9 21.500 4 20.800C6.500 19.800 7 18.500 7.500 17.300C8.300 15.600 9.800 15.200 11 15.800Z" fill="#1e73d2"/></svg>
<div class="ui" style="top:195.0px;font-size:17px;line-height:24px;left:1065px">单元格样式</div>
<svg style="left:1155.5px;top:203.25px" width="9" height="5.5" viewBox="0 0 9 5.5" ><path d="M1 1L4.5 4.5L8 1" fill="none" stroke="#333" stroke-width="1.5" stroke-linecap="round" stroke-linejoin="round"/></svg>
<div class="ui" style="top:226.5px;font-size:17px;line-height:24px;left:914.0px;width:400px;text-align:center;color:#333">样式</div>
<div class="sep" style="left:1209px;top:116px;height:128px"></div>
<svg style="left:1226px;top:122px" width="24" height="21" viewBox="0 0 24 21" ><path d="M1 1H23V19H1ZM1 7H23M1 13H23M8.300 1V19M15.600 1V19" fill="none" stroke="#3b3b3b" stroke-width="1.300"/><rect x="8.300" y="7" width="14.700" height="6" fill="#4a90d9" stroke="#2b78c5" stroke-width="1"/><rect x="0" y="5.500" width="8" height="9" fill="#fff"/><path d="M8 10H1.500M4.300 7L1.300 10L4.300 13" fill="none" stroke="#1e8ad6" stroke-width="1.500" stroke-linecap="round" stroke-linejoin="round"/></svg>
<div class="ui" style="top:121.0px;font-size:17px;line-height:24px;left:1255px">插入</div>
<svg style="left:1317.2px;top:129.2px" width="8.6" height="5.6" viewBox="0 0 8.6 5.6" ><path d="M1 1L4.3 4.6L7.6 1" fill="none" stroke="#333" stroke-width="1.5" stroke-linecap="round" stroke-linejoin="round"/></svg>
<svg style="left:1226px;top:159px" width="26" height="21" viewBox="0 0 26 21" ><path d="M1 1H23V19H1ZM1 7H23M1 13H23M8.300 1V19M15.600 1V19" fill="none" stroke="#3b3b3b" stroke-width="1.300"/><rect x="8.300" y="7" width="7.300" height="6" fill="#4a90d9" stroke="#2b78c5" stroke-width="1"/><rect x="16.500" y="5.500" width="9" height="9" fill="#fff"/><path d="M18 7L24 13M24 7L18 13" fill="none" stroke="#e8483f" stroke-width="1.500" stroke-linecap="round"/></svg>
<div class="ui" style="top:158.0px;font-size:17px;line-height:24px;left:1255px">删除</div>
<svg style="left:1317.2px;top:166.2px" width="8.6" height="5.6" viewBox="0 0 8.6 5.6" ><path d="M1 1L4.3 4.6L7.6 1" fill="none" stroke="#333" stroke-width="1.5" stroke-linecap="round" stroke-linejoin="round"/></svg>
<svg style="left:1226px;top:194px" width="24" height="24" viewBox="0 0 24 24" ><path d="M5 1V4M19 1V4M5 2.500H19" stroke="#1e8ad6" stroke-width="1.400" fill="none"/><path d="M1 6H23V23H1ZM1 10.500H23M1 18.500H23M6.500 6V23M17.500 6V23" fill="none" stroke="#3b3b3b" stroke-width="1.300"/><rect x="6.500" y="10.500" width="11" height="8" fill="#4a90d9" stroke="#2b78c5" stroke-width="1"/></svg>
<div class="ui" style="top:195.0px;font-size:17px;line-height:24px;left:1255px">格式</div>
<svg style="left:1295.0px;top:203.25px" width="9" height="5.5" viewBox="0 0 9 5.5" ><path d="M1 1L4.5 4.5L8 1" fill="none" stroke="#333" stroke-width="1.5" stroke-linecap="round" stroke-linejoin="round"/></svg>
<div class="ui" style="top:226.5px;font-size:17px;line-height:24px;left:1079.0px;width:400px;text-align:center;color:#333">单元格</div>
<div class="sep" style="left:1348px;top:116px;height:128px"></div>
<svg style="left:1368px;top:122px" width="18" height="21" viewBox="0 0 18 21" ><path d="M16.500 4V1.500H1.800L9.500 10.500L1.800 19.500H16.500V17" fill="none" stroke="#3b3b3b" stroke-width="1.500" stroke-linejoin="round" stroke-linecap="round"/></svg>
<svg style="left:1407.2px;top:129.2px" width="8.6" height="5.6" viewBox="0 0 8.6 5.6" ><path d="M1 1L4.3 4.6L7.6 1" fill="none" stroke="#333" stroke-width="1.5" stroke-linecap="round" stroke-linejoin="round"/></svg>
<svg style="left:1366px;top:159px" width="23" height="21" viewBox="0 0 23 21" ><path d="M1 3.500H22" stroke="#3b3b3b" stroke-width="1.400"/><rect x="1" y="1" width="21" height="19" fill="none" stroke="#3b3b3b" stroke-width="1.400"/><path d="M11.500 6.500V16M8 12.800L11.500 16.300L15 12.800" fill="none" stroke="#1e8ad6" stroke-width="1.500" stroke-linecap="round" stroke-linejoin="round"/></svg>
<svg style="left:1397.7px;top:166.2px" width="8.6" height="5.6" viewBox="0 0 8.6 5.6" ><path d="M1 1L4.3 4.6L7.6 1" fill="none" stroke="#333" stroke-width="1.5" stroke-linecap="round" stroke-linejoin="round"/></svg>
<svg style="left:1365px;top:194px" width="24" height="24" viewBox="0 0 24 24" ><path d="M14.500 1.500L22.500 9.500L9 22.500L1.500 15Z" fill="#fafafa" stroke="#a83bb8" stroke-width="1.500" stroke-linejoin="round"/><path d="M5.800 10.700L13.300 18.300L9 22.500L1.500 15Z" fill="#d78fe0" stroke="#a83bb8" stroke-width="1.300" stroke-linejoin="round"/></svg>
<svg style="left:1397.7px;top:203.2px" width="8.6" height="5.6" viewBox="0 0 8.6 5.6" ><path d="M1 1L4.3 4.6L7.6 1" fill="none" stroke="#333" stroke-width="1.5" stroke-linecap="round" stroke-linejoin="round"/></svg>
<svg style="left:1457px;top:121px" width="42" height="41" viewBox="0 0 42 41" ><text x="-0.500" y="18.600" font-family="Liberation Sans,sans-serif" font-size="23.500" fill="#1e8ad6">A</text><text x="0" y="38.800" font-family="Liberation Sans,sans-serif" font-size="23.500" fill="#3b3b3b">Z</text><path d="M18.500 11H40L31.500 22V31.500H27V22Z" fill="none" stroke="#3b3b3b" stroke-width="1.500" stroke-linejoin="round"/></svg>
<div class="ui" style="top:165.7px;font-size:17px;line-height:24px;left:1278.0px;width:400px;text-align:center">排序和筛选</div>
<svg style="left:1475.7px;top:195.2px" width="8.6" height="5.6" viewBox="0 0 8.6 5.6" ><path d="M1 1L4.3 4.6L7.6 1" fill="none" stroke="#333" stroke-width="1.5" stroke-linecap="round" stroke-linejoin="round"/></svg>
<svg style="left:1553px;top:120px" width="44" height="42" viewBox="0 0 44 42" ><circle cx="27.500" cy="15" r="13" fill="none" stroke="#3b3b3b" stroke-width="1.500"/><path d="M18.500 24.500L2 40.500" stroke="#3b3b3b" stroke-width="1.600" stroke-linecap="round"/></svg>
<div class="ui" style="top:165.7px;font-size:17px;line-height:24px;left:1376.5px;width:400px;text-align:center">查找和选择</div>
<svg style="left:1572.7px;top:195.2px" width="8.6" height="5.6" viewBox="0 0 8.6 5.6" ><path d="M1 1L4.3 4.6L7.6 1" fill="none" stroke="#333" stroke-width="1.5" stroke-linecap="round" stroke-linejoin="round"/></svg>
<div class="ui" style="top:226.5px;font-size:17px;line-height:24px;left:1291.0px;width:400px;text-align:center;color:#333">编辑</div>
<div class="sep" style="left:1634px;top:116px;height:128px"></div>
<svg style="left:1655px;top:121px" width="40" height="40" viewBox="0 0 40 40" ><rect x="1" y="1" width="38" height="38" fill="none" stroke="#bdbdbd" stroke-width="1.600"/><rect x="6" y="6" width="12" height="12" fill="none" stroke="#bdbdbd" stroke-width="1.600"/><rect x="22" y="6" width="12" height="12" fill="none" stroke="#bdbdbd" stroke-width="1.600"/><rect x="6" y="22" width="12" height="12" fill="none" stroke="#bdbdbd" stroke-width="1.600"/><rect x="22" y="22" width="12" height="12" fill="none" stroke="#bdbdbd" stroke-width="1.600"/></svg>
<div class="ui" style="top:166.0px;font-size:17px;line-height:24px;left:1475.0px;width:400px;text-align:center;color:#a6a6a6">加</div>
<div class="ui" style="top:188.5px;font-size:17px;line-height:24px;left:1475.0px;width:400px;text-align:center;color:#a6a6a6">载项</div>
<div class="ui" style="top:226.5px;font-size:17px;line-height:24px;left:1473.0px;width:400px;text-align:center;color:#333">加载项</div>
<div class="sep" style="left:1714px;top:116px;height:128px"></div>
<div class="abs" style="left:1744px;top:119px;width:43px;height:43px;background:#fff;border-radius:7px;box-shadow:0 0 3px rgba(0,0,0,.12)"></div>
<svg style="left:1744px;top:119px" width="43" height="43" viewBox="0 0 43 43" ><path d="M12.500 32.500H22A0 0 0 0 0 22 32.500M12.500 32.500A5.800 5.800 0 0 1 11.800 21A8 8 0 0 1 27 19.500A6 6 0 0 1 33 21.500" fill="none" stroke="#1aa0f2" stroke-width="2.800" stroke-linecap="round" stroke-linejoin="round"/><path d="M22.500 30A6 6 0 1 0 28 21.500" fill="none" stroke="#e8384f" stroke-width="2.800" stroke-linecap="round"/><path d="M26 18.500L29.500 21.800L26 25" fill="none" stroke="#e8384f" stroke-width="2" stroke-linecap="round" stroke-linejoin="round" transform="rotate(180 27.700 21.800)"/><path d="M6.500 7L8 8.500" stroke="#e8384f" stroke-width="1.500"/><path d="M8.800 7L10.500 9" stroke="#1e73d2" stroke-width="1.500"/></svg>
<div class="ui" style="top:166.0px;font-size:17px;line-height:24px;left:1564.5px;width:400px;text-align:center">保存到</div>
<div class="ui" style="top:188.5px;font-size:17px;line-height:24px;left:1564.5px;width:400px;text-align:center">天翼云盘</div>
<div class="sep" style="left:1814px;top:116px;height:128px"></div>
<svg style="left:1880.5px;top:228.75px" width="15" height="8.5" viewBox="0 0 15 8.5" ><path d="M1 1L7.5 7.5L14 1" fill="none" stroke="#333" stroke-width="1.6" stroke-linecap="round" stroke-linejoin="round"/></svg>
<div class="abs" style="left:11px;top:264px;width:229px;height:35px;background:#fff;border:1px solid #d4d4d4;border-radius:5px"></div>
<div class="ui" style="top:269.5px;font-size:18px;line-height:24px;left:18px;color:#1a1a1a">M3</div>
<svg style="left:218.5px;top:278.5px" width="14" height="8" viewBox="0 0 14 8" ><path d="M1 1L7.0 7L13 1" fill="none" stroke="#333" stroke-width="1.6" stroke-linecap="round" stroke-linejoin="round"/></svg>
<div class="abs" style="left:253.200px;top:273.6px;width:3.600px;height:3.300px;background:#444"></div>
<div class="abs" style="left:253.200px;top:279.6px;width:3.600px;height:3.300px;background:#444"></div>
<div class="abs" style="left:253.200px;top:285.6px;width:3.600px;height:3.300px;background:#444"></div>
<div class="abs" style="left:268px;top:264px;width:101px;height:35px;background:#fff;border:1px solid #d4d4d4;border-radius:5px"></div>
<svg style="left:277px;top:273px" width="17" height="17" viewBox="0 0 17 17" ><path d="M0.700 0.700L16.300 16.300M16.300 0.700L0.700 16.300" stroke="#ababab" stroke-width="1.300"/></svg>
<svg style="left:307px;top:273px" width="23" height="16" viewBox="0 0 23 16" ><path d="M0.700 8.500L7.500 15.300L22.300 0.700" fill="none" stroke="#ababab" stroke-width="1.300"/></svg>
<div class="ui" style="top:267.0px;font-size:25px;line-height:26px;left:341.5px;color:#333;font-family:'Liberation Serif',serif;font-style:italic;font-weight:400;-webkit-text-stroke:.45px #333">f</div>
<div class="ui" style="top:269.0px;font-size:20px;line-height:26px;left:350.5px;color:#333;font-family:'Liberation Serif',serif;font-style:italic;font-weight:400;-webkit-text-stroke:.45px #333">x</div>
<div class="abs" style="left:374px;top:264px;width:1535px;height:35px;background:#fff;border:1px solid #d4d4d4;border-radius:5px"></div>
<div class="ui" style="top:269.0px;font-size:20px;line-height:26px;left:389px;color:#1a1a1a">交点法</div>
<svg style="left:1888.0px;top:275.75px" width="15" height="8.5" viewBox="0 0 15 8.5" ><path d="M1 1L7.5 7.5L14 1" fill="none" stroke="#333" stroke-width="1.6" stroke-linecap="round" stroke-linejoin="round"/></svg>
<div id="sheet"><div class="bg"></div>
<div class="fill" style="left:813px;top:463px;width:338px;height:36px"></div>
<div class="fill" style="left:1265px;top:463px;width:124px;height:36px"></div>
<div class="fill" style="left:40px;top:664px;width:659px;height:277px"></div>
<div class="fill" style="left:1617px;top:664px;width:274px;height:277px"></div>
<div class="gl" style="left:40px;top:425px;width:1851px;height:1px"></div>
<div class="gl" style="left:40px;top:462px;width:659px;height:1px"></div>
<div class="gl" style="left:1151px;top:462px;width:113px;height:1px"></div>
<div class="gl" style="left:1389px;top:462px;width:502px;height:1px"></div>
<div class="gl" style="left:40px;top:499px;width:1851px;height:1px"></div>
<div class="gl" style="left:134px;top:425px;width:1px;height:111px"></div>
<div class="gl" style="left:475px;top:499px;width:1px;height:37px"></div>
<div class="gl" style="left:587px;top:499px;width:1px;height:37px"></div>
<div class="gl" style="left:699px;top:499px;width:1px;height:37px"></div>
<div class="gl" style="left:812px;top:499px;width:1px;height:37px"></div>
<div class="gl" style="left:925px;top:499px;width:1px;height:37px"></div>
<div class="gl" style="left:1038px;top:499px;width:1px;height:37px"></div>
<div class="gl" style="left:1151px;top:499px;width:1px;height:37px"></div>
<div class="gl" style="left:1264px;top:499px;width:1px;height:37px"></div>
<div class="gl" style="left:1502px;top:425px;width:1px;height:74px"></div>
<div class="gl" style="left:1616px;top:425px;width:1px;height:111px"></div>
<div class="gl" style="left:1810px;top:425px;width:1px;height:111px"></div>
<div class="ln" style="left:699px;top:425px;width:453px;height:1px"></div>
<div class="ln" style="left:699px;top:499px;width:453px;height:1px"></div>
<div class="ln" style="left:812px;top:462px;width:340px;height:1px"></div>
<div class="ln" style="left:699px;top:425px;width:1px;height:75px"></div>
<div class="ln" style="left:812px;top:425px;width:1px;height:75px"></div>
<div class="ln" style="left:925px;top:425px;width:1px;height:75px"></div>
<div class="ln" style="left:1038px;top:425px;width:1px;height:75px"></div>
<div class="ln" style="left:1151px;top:425px;width:1px;height:75px"></div>
<div class="ln" style="left:1264px;top:425px;width:126px;height:1px"></div>
<div class="ln" style="left:1264px;top:425px;width:1px;height:74px"></div>
<div class="ln" style="left:1389px;top:425px;width:1px;height:38px"></div>
<div class="ln" style="left:40px;top:536px;width:1851px;height:1px"></div>
<div class="ln" style="left:40px;top:591px;width:1851px;height:1px"></div>
<div class="ln" style="left:699px;top:536px;width:1px;height:55px"></div>
<div class="ln" style="left:925px;top:536px;width:1px;height:55px"></div>
<div class="ln" style="left:1151px;top:536px;width:1px;height:55px"></div>
<div class="ln" style="left:1389px;top:536px;width:1px;height:55px"></div>
<div class="ln" style="left:1616px;top:536px;width:1px;height:55px"></div>
<div class="ln" style="left:134px;top:591px;width:1px;height:350px"></div>
<div class="ln" style="left:239px;top:591px;width:1px;height:350px"></div>
<div class="ln" style="left:314px;top:591px;width:1px;height:350px"></div>
<div class="ln" style="left:400px;top:591px;width:1px;height:350px"></div>
<div class="ln" style="left:475px;top:591px;width:1px;height:350px"></div>
<div class="ln" style="left:587px;top:591px;width:1px;height:350px"></div>
<div class="ln" style="left:699px;top:591px;width:1px;height:350px"></div>
<div class="ln" style="left:812px;top:591px;width:1px;height:350px"></div>
<div class="ln" style="left:925px;top:591px;width:1px;height:350px"></div>
<div class="ln" style="left:1038px;top:591px;width:1px;height:350px"></div>
<div class="ln" style="left:1151px;top:591px;width:1px;height:350px"></div>
<div class="ln" style="left:1264px;top:591px;width:1px;height:350px"></div>
<div class="ln" style="left:1389px;top:591px;width:1px;height:350px"></div>
<div class="ln" style="left:1502px;top:591px;width:1px;height:350px"></div>
<div class="ln" style="left:1616px;top:591px;width:1px;height:350px"></div>
<div class="ln" style="left:1810px;top:591px;width:1px;height:350px"></div>
<div class="ln" style="left:40px;top:696px;width:1851px;height:1px"></div>
<div class="ln" style="left:40px;top:729px;width:1851px;height:1px"></div>
<div class="ln" style="left:40px;top:762px;width:1851px;height:1px"></div>
<div class="ln" style="left:40px;top:795px;width:1851px;height:1px"></div>
<div class="ln" style="left:40px;top:828px;width:1851px;height:1px"></div>
<div class="ln" style="left:40px;top:861px;width:1851px;height:1px"></div>
<div class="ln" style="left:40px;top:894px;width:1851px;height:1px"></div>
<div class="ln" style="left:40px;top:927px;width:1851px;height:1px"></div>
<div class="hb" style="left:0;top:308px;width:1891px;height:27px"></div>
<div class="hb" style="left:0;top:335px;width:39px;height:606px"></div>
<div class="hb" style="left:1265px;top:308px;width:124px;height:26px;background:#e0e0e0"></div>
<div class="hb" style="left:0;top:463px;width:38px;height:36px;background:#e0e0e0"></div>
<div class="gl" style="left:39px;top:310px;width:1px;height:25px;background:#d0d0d0"></div>
<div class="gl" style="left:134px;top:310px;width:1px;height:25px;background:#d0d0d0"></div>
<div class="gl" style="left:239px;top:310px;width:1px;height:25px;background:#d0d0d0"></div>
<div class="gl" style="left:314px;top:310px;width:1px;height:25px;background:#d0d0d0"></div>
<div class="gl" style="left:400px;top:310px;width:1px;height:25px;background:#d0d0d0"></div>
<div class="gl" style="left:475px;top:310px;width:1px;height:25px;background:#d0d0d0"></div>
<div class="gl" style="left:587px;top:310px;width:1px;height:25px;background:#d0d0d0"></div>
<div class="gl" style="left:699px;top:310px;width:1px;height:25px;background:#d0d0d0"></div>
<div class="gl" style="left:812px;top:310px;width:1px;height:25px;background:#d0d0d0"></div>
<div class="gl" style="left:925px;top:310px;width:1px;height:25px;background:#d0d0d0"></div>
<div class="gl" style="left:1038px;top:310px;width:1px;height:25px;background:#d0d0d0"></div>
<div class="gl" style="left:1151px;top:310px;width:1px;height:25px;background:#d0d0d0"></div>
<div class="gl" style="left:1264px;top:310px;width:1px;height:25px;background:#d0d0d0"></div>
<div class="gl" style="left:1389px;top:310px;width:1px;height:25px;background:#d0d0d0"></div>
<div class="gl" style="left:1502px;top:310px;width:1px;height:25px;background:#d0d0d0"></div>
<div class="gl" style="left:1616px;top:310px;width:1px;height:25px;background:#d0d0d0"></div>
<div class="gl" style="left:1810px;top:310px;width:1px;height:25px;background:#d0d0d0"></div>
<div class="gl" style="left:0px;top:425px;width:39px;height:1px;background:#dadada"></div>
<div class="gl" style="left:0px;top:462px;width:39px;height:1px;background:#dadada"></div>
<div class="gl" style="left:0px;top:499px;width:39px;height:1px;background:#dadada"></div>
<div class="gl" style="left:0px;top:536px;width:39px;height:1px;background:#dadada"></div>
<div class="gl" style="left:0px;top:591px;width:39px;height:1px;background:#dadada"></div>
<div class="gl" style="left:0px;top:663px;width:39px;height:1px;background:#dadada"></div>
<div class="gl" style="left:0px;top:696px;width:39px;height:1px;background:#dadada"></div>
<div class="gl" style="left:0px;top:729px;width:39px;height:1px;background:#dadada"></div>
<div class="gl" style="left:0px;top:762px;width:39px;height:1px;background:#dadada"></div>
<div class="gl" style="left:0px;top:795px;width:39px;height:1px;background:#dadada"></div>
<div class="gl" style="left:0px;top:828px;width:39px;height:1px;background:#dadada"></div>
<div class="gl" style="left:0px;top:861px;width:39px;height:1px;background:#dadada"></div>
<div class="gl" style="left:0px;top:894px;width:39px;height:1px;background:#dadada"></div>
<div class="gl" style="left:0px;top:927px;width:39px;height:1px;background:#dadada"></div>
<div class="ln" style="left:39px;top:335px;width:1852px;height:1px;background:#a6a6a6"></div>
<div class="ln" style="left:39px;top:335px;width:1px;height:606px;background:#a6a6a6"></div>
<div class="ln" style="left:0px;top:663px;width:1891px;height:1px;background:#9a9a9a"></div>
<div class="abs" style="left:1264px;top:334px;width:126px;height:2px;background:#107c41"></div>
<div class="abs" style="left:38px;top:462px;width:2px;height:38px;background:#107c41"></div>
<svg style="left:17px;top:313px" width="20" height="20"><path d="M19 0V19H0Z" fill="#dcdcdc"/></svg>
<div class="ch" style="left:40px;width:94px;color:#3c3c3c">A</div>
<div class="ch" style="left:135px;width:104px;color:#3c3c3c">B</div>
<div class="ch" style="left:240px;width:74px;color:#3c3c3c">C</div>
<div class="ch" style="left:315px;width:85px;color:#3c3c3c">D</div>
<div class="ch" style="left:401px;width:74px;color:#3c3c3c">E</div>
<div class="ch" style="left:476px;width:111px;color:#3c3c3c">F</div>
<div class="ch" style="left:588px;width:111px;color:#3c3c3c">G</div>
<div class="ch" style="left:700px;width:112px;color:#3c3c3c">H</div>
<div class="ch" style="left:813px;width:112px;color:#3c3c3c">I</div>
<div class="ch" style="left:926px;width:112px;color:#3c3c3c">J</div>
<div class="ch" style="left:1039px;width:112px;color:#3c3c3c">K</div>
<div class="ch" style="left:1152px;width:112px;color:#3c3c3c">L</div>
<div class="ch" style="left:1265px;width:124px;color:#1e7145">M</div>
<div class="ch" style="left:1390px;width:112px;color:#3c3c3c">N</div>
<div class="ch" style="left:1503px;width:113px;color:#3c3c3c">O</div>
<div class="ch" style="left:1617px;width:193px;color:#3c3c3c">P</div>
<div class="ch" style="left:1811px;width:112px;color:#3c3c3c">Q</div>
<div class="rh" style="top:403px;color:#3c3c3c">1</div>
<div class="rh" style="top:440px;color:#3c3c3c">2</div>
<div class="rh" style="top:477px;color:#1e7145">3</div>
<div class="rh" style="top:514px;color:#3c3c3c">4</div>
<div class="rh" style="top:569px;color:#3c3c3c">5</div>
<div class="rh" style="top:641px;color:#3c3c3c">6</div>
<div class="rh" style="top:674px;color:#3c3c3c">7</div>
<div class="rh" style="top:707px;color:#3c3c3c">8</div>
<div class="rh" style="top:740px;color:#3c3c3c">9</div>
<div class="rh" style="top:773px;color:#3c3c3c">10</div>
<div class="rh" style="top:806px;color:#3c3c3c">11</div>
<div class="rh" style="top:839px;color:#3c3c3c">12</div>
<div class="rh" style="top:872px;color:#3c3c3c">13</div>
<div class="rh" style="top:905px;color:#3c3c3c">14</div>
<div class="c l" style="left:42px;top:426px;width:94px;height:36px"><span>单位名称：</span></div>
<div class="c l" style="left:42px;top:463px;width:94px;height:36px"><span>工程名称：</span></div>
<div class="c l" style="left:42px;top:500px;width:94px;height:36px"><span>测量仪器：</span></div>
<div class="c l" style="left:138px;top:426px;width:564px;height:36px"><span><span style="display:inline-block;transform:scaleX(.7);transform-origin:0 50%;margin-right:-8.600px">XX</span>集团<span style="display:inline-block;transform:scaleX(.7);transform-origin:0 50%;margin-right:-8.600px">XX</span>公司</span></div>
<div class="c l" style="left:138px;top:463px;width:564px;height:36px"><span><span style="display:inline-block;transform:scaleX(.7);transform-origin:0 50%;margin-right:-8.600px">XX</span>工程</span></div>
<div class="c l" style="left:479px;top:500px;width:111px;height:36px;white-space:pre;word-spacing:4.750px"><span>天  气：</span></div>
<div class="c " style="left:813px;top:500px;width:112px;height:36px;white-space:pre;word-spacing:4.750px"><span>气  压：</span></div>
<div class="c l" style="left:1041px;top:500px;width:112px;height:36px;white-space:pre;word-spacing:4.750px"><span>温  度：</span></div>
<div class="c r" style="left:1036px;top:500px;width:112px;height:36px"><span>℃</span></div>
<div class="c l" style="left:1269px;top:500px;width:351px;height:36px"><span>提示：先点击单元格再点击选项按钮</span></div>
<div class="c " style="left:700px;top:426px;width:112px;height:73px;display:block;line-height:23px;padding-top:2px"><span><span class="n" style="letter-spacing:.6px">metadata.xm<br>l</span><br>中心坐标</span></div>
<div class="c n" style="left:813px;top:426px;width:112px;height:36px;letter-spacing:-0.75px;padding-left:-0.75px"><span>X(m)</span></div>
<div class="c n" style="left:926px;top:426px;width:112px;height:36px;letter-spacing:-0.75px;padding-left:-0.75px"><span>Y(m)</span></div>
<div class="c n" style="left:1039px;top:426px;width:112px;height:36px;letter-spacing:-0.25px;padding-left:-0.25px"><span>Z(m)</span></div>
<div class="c n" style="left:813px;top:463px;width:112px;height:36px;letter-spacing:0.41px;padding-left:0.41px"><span>3468736.648</span></div>
<div class="c n" style="left:926px;top:463px;width:112px;height:36px;letter-spacing:0.45px;padding-left:0.45px"><span>451285.049</span></div>
<div class="c n" style="left:1039px;top:463px;width:112px;height:36px;letter-spacing:0.64px;padding-left:0.64px"><span>514.017</span></div>
<div class="c " style="left:1265px;top:426px;width:124px;height:36px;font-weight:700;letter-spacing:1.5px;padding-left:1.5px"><span>选择计算线型</span></div>
<div class="c " style="left:1265px;top:463px;width:124px;height:36px"><span>交点法</span></div>
<div class="c " style="left:40px;top:537px;width:659px;height:54px"><span>数据输入区域</span></div>
<div class="c " style="left:700px;top:537px;width:225px;height:54px"><span>1#孔桩坐标</span></div>
<div class="c " style="left:926px;top:537px;width:225px;height:54px"><span>2#孔桩坐标</span></div>
<div class="c " style="left:1152px;top:537px;width:237px;height:54px"><span>3#孔桩坐标</span></div>
<div class="c " style="left:1390px;top:537px;width:226px;height:54px"><span>4#孔桩坐标</span></div>
<div class="c " style="left:1617px;top:537px;width:306px;height:54px"><span>设计参数</span></div>
<div class="c " style="left:40px;top:592px;width:94px;height:71px"><span>墩号</span></div>
<div class="c " style="left:135px;top:592px;width:104px;height:71px"><span>墩中心里程</span></div>
<div class="c " style="left:240px;top:592px;width:74px;height:71px;line-height:23.600px"><span>中心偏<br>距<br>(m)</span></div>
<div class="c " style="left:315px;top:592px;width:85px;height:71px;line-height:23.600px"><span>斜交角度<br><span style="letter-spacing:3.500px;padding-left:3.500px">(&nbsp;°&nbsp;)</span></span></div>
<div class="c " style="left:401px;top:592px;width:74px;height:71px;line-height:23.600px"><span>间距<br>(m)</span></div>
<div class="c " style="left:476px;top:592px;width:111px;height:71px;line-height:23.600px"><span>孔桩数量<br>(根)</span></div>
<div class="c " style="left:588px;top:592px;width:111px;height:71px;line-height:23.600px"><span>孔桩直径<br>(m)</span></div>
<div class="c n" style="left:700px;top:592px;width:112px;height:71px;letter-spacing:-0.5px;padding-left:-0.5px"><span>X(N)</span></div>
<div class="c n" style="left:813px;top:592px;width:112px;height:71px;letter-spacing:0.0px;padding-left:0.0px"><span>Y(E)</span></div>
<div class="c n" style="left:926px;top:592px;width:112px;height:71px;letter-spacing:-0.5px;padding-left:-0.5px"><span>X(N)</span></div>
<div class="c n" style="left:1039px;top:592px;width:112px;height:71px;letter-spacing:0.0px;padding-left:0.0px"><span>Y(E)</span></div>
<div class="c n" style="left:1152px;top:592px;width:112px;height:71px;letter-spacing:-0.5px;padding-left:-0.5px"><span>X(N)</span></div>
<div class="c n" style="left:1265px;top:592px;width:124px;height:71px;letter-spacing:0.0px;padding-left:0.0px"><span>Y(E)</span></div>
<div class="c n" style="left:1390px;top:592px;width:112px;height:71px;letter-spacing:-0.5px;padding-left:-0.5px"><span>X(N)</span></div>
<div class="c n" style="left:1503px;top:592px;width:113px;height:71px;letter-spacing:0.0px;padding-left:0.0px"><span>Y(E)</span></div>
<div class="c " style="left:1617px;top:592px;width:193px;height:71px"><span>桩底设计标高(m)</span></div>
<div class="c " style="left:1811px;top:592px;width:112px;height:71px"><span>桩基高度<span style="margin-left:4px">(m)</span></span></div>
<div class="c n" style="left:40px;top:664px;width:94px;height:32px;letter-spacing:0.0px;padding-left:0.0px"><span>1</span></div>
<div class="c n" style="left:135px;top:664px;width:104px;height:32px;letter-spacing:0.64px;padding-left:0.64px"><span>12193.1</span></div>
<div class="c n" style="left:240px;top:664px;width:74px;height:32px;letter-spacing:1.25px;padding-left:1.25px"><span>-8.796</span></div>
<div class="c n" style="left:315px;top:664px;width:85px;height:32px;letter-spacing:0.0px;padding-left:0.0px"><span>105</span></div>
<div class="c n" style="left:401px;top:664px;width:74px;height:32px;letter-spacing:0.9px;padding-left:0.9px"><span>9.835</span></div>
<div class="c n" style="left:476px;top:664px;width:111px;height:32px;letter-spacing:0.0px;padding-left:0.0px"><span>2</span></div>
<div class="c n" style="left:588px;top:664px;width:111px;height:32px;letter-spacing:1.5px;padding-left:1.5px"><span>1.6</span></div>
<div class="c n" style="left:700px;top:664px;width:112px;height:32px;letter-spacing:0.41px;padding-left:0.41px"><span>3468805.818</span></div>
<div class="c n" style="left:813px;top:664px;width:112px;height:32px;letter-spacing:0.45px;padding-left:0.45px"><span>451590.186</span></div>
<div class="c n" style="left:926px;top:664px;width:112px;height:32px;letter-spacing:0.41px;padding-left:0.41px"><span>3468815.642</span></div>
<div class="c n" style="left:1039px;top:664px;width:112px;height:32px;letter-spacing:0.45px;padding-left:0.45px"><span>451589.706</span></div>
<div class="c n" style="left:1617px;top:664px;width:193px;height:32px;letter-spacing:0.64px;padding-left:0.64px"><span>515.208</span></div>
<div class="c n" style="left:1811px;top:664px;width:112px;height:32px;letter-spacing:1.5px;padding-left:1.5px"><span>8.5</span></div>
<div class="c n" style="left:40px;top:697px;width:94px;height:32px;letter-spacing:0.0px;padding-left:0.0px"><span>1</span></div>
<div class="c n" style="left:135px;top:697px;width:104px;height:32px;letter-spacing:0.64px;padding-left:0.64px"><span>12193.1</span></div>
<div class="c n" style="left:240px;top:697px;width:74px;height:32px;letter-spacing:0.9px;padding-left:0.9px"><span>8.699</span></div>
<div class="c n" style="left:315px;top:697px;width:85px;height:32px;letter-spacing:0.0px;padding-left:0.0px"><span>105</span></div>
<div class="c n" style="left:401px;top:697px;width:74px;height:32px;letter-spacing:0.9px;padding-left:0.9px"><span>9.835</span></div>
<div class="c n" style="left:476px;top:697px;width:111px;height:32px;letter-spacing:0.0px;padding-left:0.0px"><span>2</span></div>
<div class="c n" style="left:588px;top:697px;width:111px;height:32px;letter-spacing:1.5px;padding-left:1.5px"><span>1.6</span></div>
<div class="c n" style="left:700px;top:697px;width:112px;height:32px;letter-spacing:0.41px;padding-left:0.41px"><span>3468823.292</span></div>
<div class="c n" style="left:813px;top:697px;width:112px;height:32px;letter-spacing:0.45px;padding-left:0.45px"><span>451589.331</span></div>
<div class="c n" style="left:926px;top:697px;width:112px;height:32px;letter-spacing:0.47px;padding-left:0.47px"><span>3468833.116</span></div>
<div class="c n" style="left:1039px;top:697px;width:112px;height:32px;letter-spacing:0.45px;padding-left:0.45px"><span>451588.851</span></div>
<div class="c n" style="left:1617px;top:697px;width:193px;height:32px;letter-spacing:0.64px;padding-left:0.64px"><span>515.208</span></div>
<div class="c n" style="left:1811px;top:697px;width:112px;height:32px;letter-spacing:1.5px;padding-left:1.5px"><span>8.5</span></div>
<div class="c n" style="left:40px;top:730px;width:94px;height:32px;letter-spacing:0.0px;padding-left:0.0px"><span>2</span></div>
<div class="c n" style="left:135px;top:730px;width:104px;height:32px;letter-spacing:0.64px;padding-left:0.64px"><span>12223.1</span></div>
<div class="c n" style="left:240px;top:730px;width:74px;height:32px;letter-spacing:1.07px;padding-left:1.07px"><span>-8.7785</span></div>
<div class="c n" style="left:315px;top:730px;width:85px;height:32px;letter-spacing:0.0px;padding-left:0.0px"><span>105</span></div>
<div class="c n" style="left:401px;top:730px;width:74px;height:32px;letter-spacing:0.9px;padding-left:0.9px"><span>9.835</span></div>
<div class="c n" style="left:476px;top:730px;width:111px;height:32px;letter-spacing:0.0px;padding-left:0.0px"><span>2</span></div>
<div class="c n" style="left:588px;top:730px;width:111px;height:32px;letter-spacing:1.5px;padding-left:1.5px"><span>1.6</span></div>
<div class="c n" style="left:700px;top:730px;width:112px;height:32px;letter-spacing:0.41px;padding-left:0.41px"><span>3468797.046</span></div>
<div class="c n" style="left:813px;top:730px;width:112px;height:32px;letter-spacing:0.45px;padding-left:0.45px"><span>451561.148</span></div>
<div class="c n" style="left:926px;top:730px;width:112px;height:32px;letter-spacing:0.41px;padding-left:0.41px"><span>3468806.878</span></div>
<div class="c n" style="left:1039px;top:730px;width:112px;height:32px;letter-spacing:0.45px;padding-left:0.45px"><span>451560.919</span></div>
<div class="c n" style="left:1617px;top:730px;width:193px;height:32px;letter-spacing:0.64px;padding-left:0.64px"><span>514.508</span></div>
<div class="c n" style="left:1811px;top:730px;width:112px;height:32px;letter-spacing:1.5px;padding-left:1.5px"><span>8.5</span></div>
<div class="c n" style="left:40px;top:763px;width:94px;height:32px;letter-spacing:0.0px;padding-left:0.0px"><span>2</span></div>
<div class="c n" style="left:135px;top:763px;width:104px;height:32px;letter-spacing:0.64px;padding-left:0.64px"><span>12223.1</span></div>
<div class="c n" style="left:240px;top:763px;width:74px;height:32px;letter-spacing:0.75px;padding-left:0.75px"><span>8.7165</span></div>
<div class="c n" style="left:315px;top:763px;width:85px;height:32px;letter-spacing:0.0px;padding-left:0.0px"><span>105</span></div>
<div class="c n" style="left:401px;top:763px;width:74px;height:32px;letter-spacing:0.9px;padding-left:0.9px"><span>9.835</span></div>
<div class="c n" style="left:476px;top:763px;width:111px;height:32px;letter-spacing:0.0px;padding-left:0.0px"><span>2</span></div>
<div class="c n" style="left:588px;top:763px;width:111px;height:32px;letter-spacing:1.5px;padding-left:1.5px"><span>1.6</span></div>
<div class="c n" style="left:700px;top:763px;width:112px;height:32px;letter-spacing:0.41px;padding-left:0.41px"><span>3468814.536</span></div>
<div class="c n" style="left:813px;top:763px;width:112px;height:32px;letter-spacing:0.45px;padding-left:0.45px"><span>451560.741</span></div>
<div class="c n" style="left:926px;top:763px;width:112px;height:32px;letter-spacing:0.41px;padding-left:0.41px"><span>3468824.368</span></div>
<div class="c n" style="left:1039px;top:763px;width:112px;height:32px;letter-spacing:0.45px;padding-left:0.45px"><span>451560.513</span></div>
<div class="c n" style="left:1617px;top:763px;width:193px;height:32px;letter-spacing:0.64px;padding-left:0.64px"><span>514.508</span></div>
<div class="c n" style="left:1811px;top:763px;width:112px;height:32px;letter-spacing:1.5px;padding-left:1.5px"><span>8.5</span></div>
<div class="c n" style="left:40px;top:796px;width:94px;height:32px;letter-spacing:0.0px;padding-left:0.0px"><span>3</span></div>
<div class="c n" style="left:135px;top:796px;width:104px;height:32px;letter-spacing:0.64px;padding-left:0.64px"><span>12253.1</span></div>
<div class="c n" style="left:240px;top:796px;width:74px;height:32px;letter-spacing:1.07px;padding-left:1.07px"><span>-8.7615</span></div>
<div class="c n" style="left:315px;top:796px;width:85px;height:32px;letter-spacing:0.0px;padding-left:0.0px"><span>105</span></div>
<div class="c n" style="left:401px;top:796px;width:74px;height:32px;letter-spacing:0.9px;padding-left:0.9px"><span>9.835</span></div>
<div class="c n" style="left:476px;top:796px;width:111px;height:32px;letter-spacing:0.0px;padding-left:0.0px"><span>2</span></div>
<div class="c n" style="left:588px;top:796px;width:111px;height:32px;letter-spacing:1.5px;padding-left:1.5px"><span>1.6</span></div>
<div class="c n" style="left:700px;top:796px;width:112px;height:32px;letter-spacing:0.41px;padding-left:0.41px"><span>3468788.857</span></div>
<div class="c n" style="left:813px;top:796px;width:112px;height:32px;letter-spacing:0.45px;padding-left:0.45px"><span>451532.096</span></div>
<div class="c n" style="left:926px;top:796px;width:112px;height:32px;letter-spacing:0.41px;padding-left:0.41px"><span>3468798.691</span></div>
<div class="c n" style="left:1039px;top:796px;width:112px;height:32px;letter-spacing:0.45px;padding-left:0.45px"><span>451532.008</span></div>
<div class="c n" style="left:1617px;top:796px;width:193px;height:32px;letter-spacing:0.64px;padding-left:0.64px"><span>513.808</span></div>
<div class="c n" style="left:1811px;top:796px;width:112px;height:32px;letter-spacing:1.5px;padding-left:1.5px"><span>8.5</span></div>
<div class="c n" style="left:40px;top:829px;width:94px;height:32px;letter-spacing:0.0px;padding-left:0.0px"><span>3</span></div>
<div class="c n" style="left:135px;top:829px;width:104px;height:32px;letter-spacing:0.64px;padding-left:0.64px"><span>12253.1</span></div>
<div class="c n" style="left:240px;top:829px;width:74px;height:32px;letter-spacing:0.75px;padding-left:0.75px"><span>8.7335</span></div>
<div class="c n" style="left:315px;top:829px;width:85px;height:32px;letter-spacing:0.0px;padding-left:0.0px"><span>105</span></div>
<div class="c n" style="left:401px;top:829px;width:74px;height:32px;letter-spacing:0.9px;padding-left:0.9px"><span>9.835</span></div>
<div class="c n" style="left:476px;top:829px;width:111px;height:32px;letter-spacing:0.0px;padding-left:0.0px"><span>2</span></div>
<div class="c n" style="left:588px;top:829px;width:111px;height:32px;letter-spacing:1.5px;padding-left:1.5px"><span>1.6</span></div>
<div class="c n" style="left:700px;top:829px;width:112px;height:32px;letter-spacing:0.41px;padding-left:0.41px"><span>3468806.351</span></div>
<div class="c n" style="left:813px;top:829px;width:112px;height:32px;letter-spacing:0.45px;padding-left:0.45px"><span>451531.939</span></div>
<div class="c n" style="left:926px;top:829px;width:112px;height:32px;letter-spacing:0.41px;padding-left:0.41px"><span>3468816.186</span></div>
<div class="c n" style="left:1039px;top:829px;width:112px;height:32px;letter-spacing:0.45px;padding-left:0.45px"><span>451531.851</span></div>
<div class="c n" style="left:1617px;top:829px;width:193px;height:32px;letter-spacing:0.64px;padding-left:0.64px"><span>513.808</span></div>
<div class="c n" style="left:1811px;top:829px;width:112px;height:32px;letter-spacing:1.5px;padding-left:1.5px"><span>8.5</span></div>
<div class="c n" style="left:40px;top:862px;width:94px;height:32px;letter-spacing:0.0px;padding-left:0.0px"><span>4</span></div>
<div class="c n" style="left:135px;top:862px;width:104px;height:32px;letter-spacing:0.64px;padding-left:0.64px"><span>12283.1</span></div>
<div class="c n" style="left:240px;top:862px;width:74px;height:32px;letter-spacing:1.07px;padding-left:1.07px"><span>-8.7425</span></div>
<div class="c n" style="left:315px;top:862px;width:85px;height:32px;letter-spacing:0.0px;padding-left:0.0px"><span>105</span></div>
<div class="c n" style="left:401px;top:862px;width:74px;height:32px;letter-spacing:0.9px;padding-left:0.9px"><span>9.835</span></div>
<div class="c n" style="left:476px;top:862px;width:111px;height:32px;letter-spacing:0.0px;padding-left:0.0px"><span>2</span></div>
<div class="c n" style="left:588px;top:862px;width:111px;height:32px;letter-spacing:1.5px;padding-left:1.5px"><span>1.6</span></div>
<div class="c n" style="left:700px;top:862px;width:112px;height:32px;letter-spacing:0.41px;padding-left:0.41px"><span>3468780.921</span></div>
<div class="c n" style="left:813px;top:862px;width:112px;height:32px;letter-spacing:0.45px;padding-left:0.45px"><span>451503.129</span></div>
<div class="c n" style="left:926px;top:862px;width:112px;height:32px;letter-spacing:0.41px;padding-left:0.41px"><span>3468790.756</span></div>
<div class="c n" style="left:1039px;top:862px;width:112px;height:32px;letter-spacing:0.45px;padding-left:0.45px"><span>451503.070</span></div>
<div class="c n" style="left:1617px;top:862px;width:193px;height:32px;letter-spacing:0.64px;padding-left:0.64px"><span>513.608</span></div>
<div class="c n" style="left:1811px;top:862px;width:112px;height:32px;letter-spacing:0.0px;padding-left:0.0px"><span>8</span></div>
<div class="c n" style="left:40px;top:895px;width:94px;height:32px;letter-spacing:0.0px;padding-left:0.0px"><span>4</span></div>
<div class="c n" style="left:135px;top:895px;width:104px;height:32px;letter-spacing:0.64px;padding-left:0.64px"><span>12283.1</span></div>
<div class="c n" style="left:240px;top:895px;width:74px;height:32px;letter-spacing:0.75px;padding-left:0.75px"><span>8.7535</span></div>
<div class="c n" style="left:315px;top:895px;width:85px;height:32px;letter-spacing:0.0px;padding-left:0.0px"><span>105</span></div>
<div class="c n" style="left:401px;top:895px;width:74px;height:32px;letter-spacing:0.9px;padding-left:0.9px"><span>9.835</span></div>
<div class="c n" style="left:476px;top:895px;width:111px;height:32px;letter-spacing:0.0px;padding-left:0.0px"><span>2</span></div>
<div class="c n" style="left:588px;top:895px;width:111px;height:32px;letter-spacing:1.5px;padding-left:1.5px"><span>1.6</span></div>
<div class="c n" style="left:700px;top:895px;width:112px;height:32px;letter-spacing:0.41px;padding-left:0.41px"><span>3468798.417</span></div>
<div class="c n" style="left:813px;top:895px;width:112px;height:32px;letter-spacing:0.45px;padding-left:0.45px"><span>451503.023</span></div>
<div class="c n" style="left:926px;top:895px;width:112px;height:32px;letter-spacing:0.41px;padding-left:0.41px"><span>3468808.252</span></div>
<div class="c n" style="left:1039px;top:895px;width:112px;height:32px;letter-spacing:0.45px;padding-left:0.45px"><span>451502.964</span></div>
<div class="c n" style="left:1617px;top:895px;width:193px;height:32px;letter-spacing:0.64px;padding-left:0.64px"><span>513.608</span></div>
<div class="c n" style="left:1811px;top:895px;width:112px;height:32px;letter-spacing:0.0px;padding-left:0.0px"><span>8</span></div>
<div class="c n" style="left:40px;top:928px;width:94px;height:32px;letter-spacing:0.0px;padding-left:0.0px"><span>5</span></div>
<div class="c n" style="left:135px;top:928px;width:104px;height:32px;letter-spacing:0.64px;padding-left:0.64px"><span>12313.1</span></div>
<div class="c n" style="left:240px;top:928px;width:74px;height:32px;letter-spacing:1.07px;padding-left:1.07px"><span>-8.7245</span></div>
<div class="c n" style="left:315px;top:928px;width:85px;height:32px;letter-spacing:0.0px;padding-left:0.0px"><span>105</span></div>
<div class="c n" style="left:401px;top:928px;width:74px;height:32px;letter-spacing:0.9px;padding-left:0.9px"><span>9.835</span></div>
<div class="c n" style="left:476px;top:928px;width:111px;height:32px;letter-spacing:0.0px;padding-left:0.0px"><span>2</span></div>
<div class="c n" style="left:588px;top:928px;width:111px;height:32px;letter-spacing:1.5px;padding-left:1.5px"><span>1.6</span></div>
<div class="c n" style="left:700px;top:928px;width:112px;height:32px;letter-spacing:0.41px;padding-left:0.41px"><span>3468773.003</span></div>
<div class="c n" style="left:813px;top:928px;width:112px;height:32px;letter-spacing:0.45px;padding-left:0.45px"><span>451474.247</span></div>
<div class="c n" style="left:926px;top:928px;width:112px;height:32px;letter-spacing:0.41px;padding-left:0.41px"><span>3468782.735</span></div>
<div class="c n" style="left:1039px;top:928px;width:112px;height:32px;letter-spacing:0.45px;padding-left:0.45px"><span>451474.201</span></div>
<div class="c n" style="left:1617px;top:928px;width:193px;height:32px;letter-spacing:0.64px;padding-left:0.64px"><span>513.008</span></div>
<div class="c n" style="left:1811px;top:928px;width:112px;height:32px;letter-spacing:0.0px;padding-left:0.0px"><span>8</span></div>
<div class="tri" style="left:691px;top:537px"></div>
<div class="tri" style="left:917px;top:537px"></div>
<div class="tri" style="left:1143px;top:537px"></div>
<div class="tri" style="left:1381px;top:537px"></div>
<div class="tri" style="left:1608px;top:537px"></div>
<div class="tri" style="left:231px;top:592px"></div>
<div class="tri" style="left:306px;top:592px"></div>
<div class="tri" style="left:392px;top:592px"></div>
<div class="tri" style="left:467px;top:592px"></div>
<div class="tri" style="left:579px;top:592px"></div>
<div class="tri" style="left:691px;top:592px"></div>
<div class="abs" style="left:1263px;top:461px;width:128px;height:40px;border:2px solid #1e7145"></div>
<div class="abs" style="left:1385px;top:495px;width:7px;height:7px;background:#1e7145;border-left:1px solid #fff;border-top:1px solid #fff"></div>
<div class="abs" style="left:1391px;top:475px;width:22px;height:23px;border:1px solid #b5b5b5;background:linear-gradient(#fff,#e9ebf1)"></div>
<svg style="left:1397px;top:485px" width="10" height="6"><path d="M0.5 0.5H8.5L4.5 4.8Z" fill="#555"/></svg>
<div class="btn" style="left:49px;top:349px;width:120px;height:51px;background:#fff"><span>返回页面</span></div>
<div class="btn" style="left:179px;top:349px;width:118px;height:51px;background:#fff"><span>清空内容</span></div>
<div class="btn" style="left:1261px;top:349px;width:163px;height:51px"><span>点击计算坐标</span></div>
<div class="btn" style="left:1435px;top:349px;width:122px;height:51px"><span><span style="display:inline-block;transform:scaleX(.72);transform-origin:0 50%;margin-right:-11px">CAD</span>展点</span></div>
<div class="btn" style="left:1596px;top:349px;width:149px;height:51px;background:#c0ffc0"><span>复制新建工作表</span></div>
<div class="btn" style="left:1413px;top:433px;width:163px;height:51px"><span>生成笛卡尔3dxyz</span></div>
<div class="btn" style="left:1584px;top:433px;width:163px;height:51px"><span>生成高斯3dxyz</span></div>
<div class="t" style="left:481px;width:1000px;top:345.500px;text-align:center;font:500 37.7px/52px 'Liberation Serif','Noto Serif CJK SC',serif;color:#000">公路桩基绘图坐标计算表</div>
<div class="t" style="left:481px;width:1000px;top:394px;text-align:center;font:17px/22px 'Liberation Serif','Noto Serif CJK SC',serif;color:#000;letter-spacing:1px">(近似计算)</div>
</div><div class="abs" style="left:1894px;top:308px;width:24px;height:634px;background:#f5f5f5;border-radius:12px"></div>
<svg style="left:1900px;top:315px" width="12" height="10" viewBox="0 0 12 10" ><path d="M6 0.800L11.300 9.200H0.700Z" fill="#717171" stroke="#717171" stroke-width="1" stroke-linejoin="round"/></svg>
<div class="abs" style="left:1900px;top:332px;width:11.500px;height:41px;background:#717171;border-radius:6px"></div>
<svg style="left:1900px;top:924px" width="12" height="10" viewBox="0 0 12 10" ><path d="M6 9.200L11.300 0.800H0.700Z" fill="#717171" stroke="#717171" stroke-width="1" stroke-linejoin="round"/></svg>
<div class="abs" style="left:0;top:950px;width:1891px;height:24px;background:#f5f5f5;border-radius:12px"></div>
<svg style="left:7px;top:956px" width="10" height="12" viewBox="0 0 10 12" ><path d="M0.800 6L9.200 0.700V11.300Z" fill="#717171" stroke="#717171" stroke-width="1" stroke-linejoin="round"/></svg>
<div class="abs" style="left:24px;top:956px;width:1205px;height:12px;background:#717171;border-radius:6px"></div>
<svg style="left:1874px;top:956px" width="10" height="12" viewBox="0 0 10 12" ><path d="M9.200 6L0.800 0.700V11.300Z" fill="#717171" stroke="#717171" stroke-width="1" stroke-linejoin="round"/></svg>
<div class="abs" style="left:0;top:985px;width:1920px;height:30px;background:#f3f3f3"></div>
<div class="ui" style="top:989.5px;font-size:17px;line-height:24px;left:16px;color:#333">就绪</div>
<svg style="left:77px;top:991px" width="22" height="19" viewBox="0 0 22 19" ><path d="M1.800 16.300V1.800H19.700V5.500M1.800 16.300H7.500" fill="none" stroke="#333" stroke-width="1.800"/><path d="M1.800 4.800H19.700" stroke="#333" stroke-width="1.600"/><path d="M4.500 8.300H8.500M4.500 11.800H7" stroke="#333" stroke-width="1.400"/><circle cx="14.500" cy="11.800" r="5.800" fill="none" stroke="#333" stroke-width="1.800"/><circle cx="14.500" cy="11.800" r="2.500" fill="#333"/></svg>
<svg style="left:123px;top:990px" width="21" height="20" viewBox="0 0 21 20" ><circle cx="8.700" cy="3.800" r="2.700" fill="#f3f3f3" stroke="#333" stroke-width="1.400"/><path d="M2.500 5.500C5 7.500 6.500 7.800 8.700 7.800C10.900 7.800 12.400 7.500 14.900 5.500M7 8V12L4 17.200M10.400 8V11L11.300 13.500M8.700 12.500L10.300 17" fill="none" stroke="#333" stroke-width="4.400" stroke-linecap="round" stroke-linejoin="round"/><path d="M2.500 5.500C5 7.500 6.500 7.800 8.700 7.800C10.900 7.800 12.400 7.500 14.900 5.500M7 8V12L4 17.200M10.400 8V11L11.300 13.500M8.700 12.500L10.300 17" fill="none" stroke="#f3f3f3" stroke-width="1.700" stroke-linecap="round" stroke-linejoin="round"/><rect x="12.300" y="9.500" width="9" height="10.500" fill="#f3f3f3"/><text x="13.300" y="19" font-family="Liberation Sans,sans-serif" font-size="12" font-weight="700" fill="#333">?</text></svg>
<div class="ui" style="top:989.5px;font-size:17px;line-height:24px;left:148px;color:#333">辅助功能: 不可用</div>
<div class="abs" style="left:1494px;top:986px;width:56px;height:29px;background:#dcdcdc"></div>
<svg style="left:1512px;top:991px" width="19" height="18" viewBox="0 0 19 18" ><path d="M1 1H18V17H1ZM1 6.300H18M1 11.600H18M6.700 1V17M12.300 1V17" fill="none" stroke="#222" stroke-width="1.400"/></svg>
<svg style="left:1567px;top:991px" width="21" height="18" viewBox="0 0 21 18" ><rect x="1" y="1" width="19" height="16" fill="none" stroke="#222" stroke-width="1.400"/><rect x="5" y="4.500" width="11" height="9.500" fill="none" stroke="#222" stroke-width="1.300"/><path d="M7.500 7.500H13.500M7.500 10.500H13.500" stroke="#222" stroke-width="1.200"/></svg>
<svg style="left:1623px;top:991px" width="22" height="18" viewBox="0 0 22 18" ><path d="M1 1H21V17H1Z" fill="none" stroke="#222" stroke-width="1.400"/><path d="M8 1V8.500H14.500V1M1 8.500H8" fill="none" stroke="#222" stroke-width="1.300"/></svg>
<div class="abs" style="left:1670px;top:1000px;width:11px;height:1.400px;background:#444"></div>
<div class="abs" style="left:1687px;top:1000px;width:139px;height:1px;background:#8a8a8a"></div>
<div class="abs" style="left:1754px;top:993px;width:7px;height:15px;background:#555;border-radius:1px"></div>
<div class="abs" style="left:1834px;top:1000px;width:11px;height:1.400px;background:#444"></div>
<div class="abs" style="left:1838.800px;top:995px;width:1.400px;height:11px;background:#444"></div>
<div class="ui" style="top:988.5px;font-size:17px;line-height:24px;left:1863px;color:#333">100%</div>
</body></html>
